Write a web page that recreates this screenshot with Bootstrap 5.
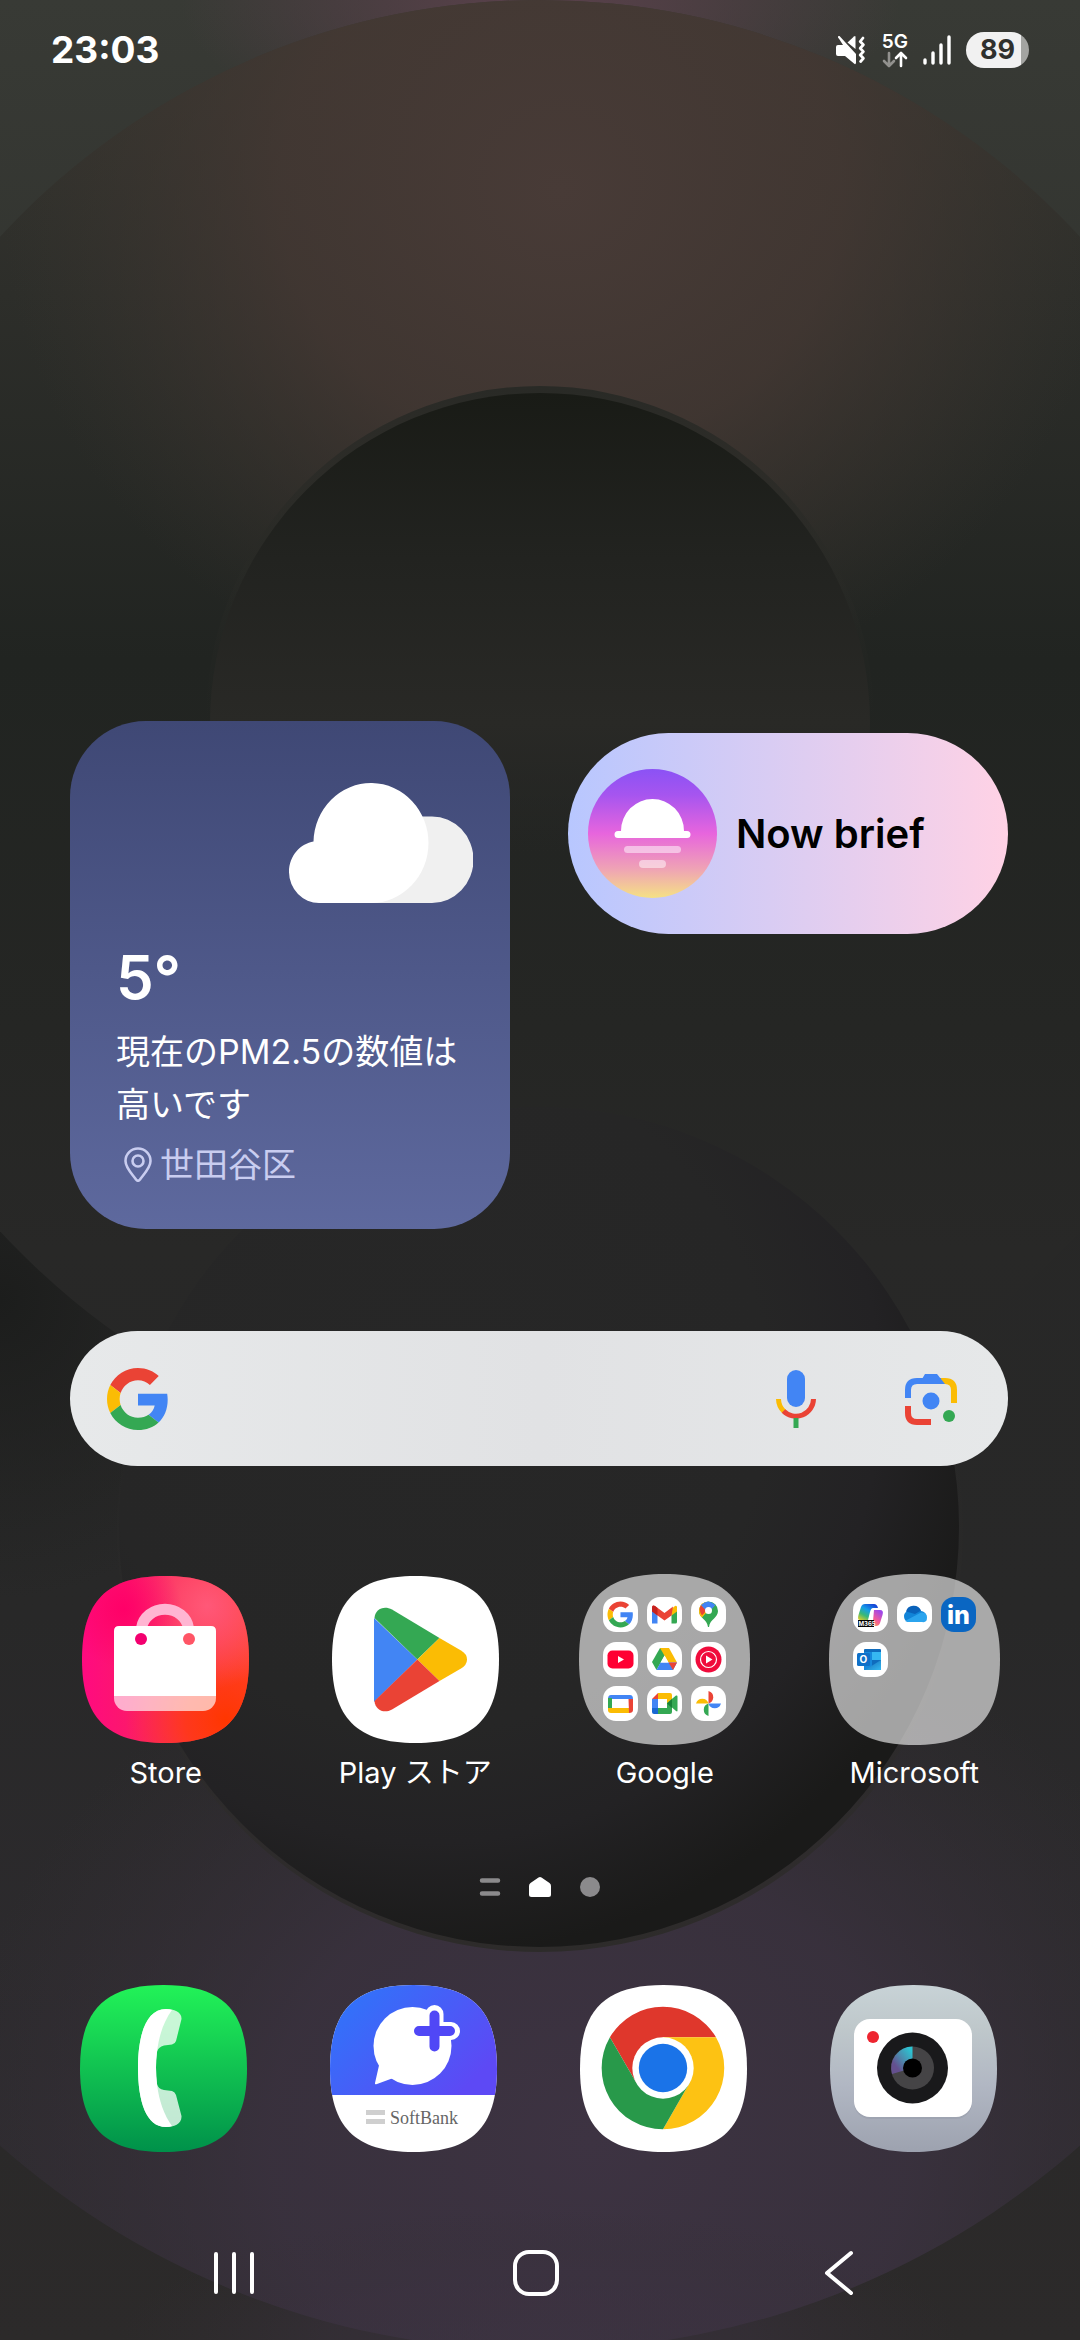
<!DOCTYPE html>
<html lang="ja">
<head>
<meta charset="utf-8">
<meta name="viewport" content="width=device-width, initial-scale=1">
<title>Home</title>
<link href="https://cdn.jsdelivr.net/npm/bootstrap@5.3.0/dist/css/bootstrap.min.css" rel="stylesheet">
<style>
  body { background: #272727; color: #fff; font-family: Inter, "Noto Sans CJK JP", sans-serif; }
  .wallpaper { z-index: -1; }
  .statusbar { height: 100px; padding: 0 51px; }
  .clock { font-size: 37px; line-height: 48px; font-weight: 700; }
  .status-icons { gap: 15px; }
  .net { font-size: 19px; line-height: 18px; font-weight: 600; }
  .battery { width: 63px; height: 36px; border-radius: 18px; font-size: 27px; font-weight: 700; color: #2f302d; background: linear-gradient(90deg, #f1f1f1 87%, #a3a4a1 87%); }
  .widgets { margin-top: 621px; padding: 0 72px 0 70px; display: grid; grid-template-columns: 1fr 1fr; gap: 58px; }
  .weather { border-radius: 76px; padding: 61px 37px 38px 46px; background: linear-gradient(#3f4875, #5e699e); }
  .temp { font-size: 60px; line-height: 72px; font-weight: 600; margin-top: 38px; }
  .report { font-size: 34px; line-height: 53px; margin-top: 12px; }
  .place { font-size: 34px; line-height: 53px; color: #c9cdf0; gap: 8px; margin-top: 7px; padding-left: 8px; }
  .brief { height: 201px; margin-top: 12px; padding-left: 20px; gap: 19px; border-radius: 101px; color: #000; font-size: 40px; font-weight: 600; background: linear-gradient(90deg, #b8c7ff, #ffd2e5); }
  .searchbar { height: 135px; margin: 102px 72px 0 70px; padding: 0 47px 0 37px; border-radius: 68px; background: linear-gradient(90deg, #e7e9ea, #e1e2e4 50%, #e6e8e9); }
  .searchbar input { background: none; color: #222; font-size: 34px; outline: 0; min-width: 0; }
  .voice { margin-right: 67px; }
  .apps { margin-top: 108px; padding: 0 41px; }
  .dock { margin-top: 87px; padding: 0 42px 0 38px; }
  .app { flex: 1 1 0; font-size: 29px; line-height: 40px; }
  .app-art { height: 171px; margin-bottom: 8px; }
  .pages { margin-top: 83px; height: 22px; gap: 28px; }
  .sysnav { margin-top: 88px; padding: 0 90px 0 83px; }
  .sysnav button { flex: 1 1 0; height: 66px; }
  .serif { font-family: "Liberation Serif", serif; }
</style>
<script src="https://cdn.jsdelivr.net/npm/bootstrap@5.3.0/dist/js/bootstrap.bundle.min.js"></script>
</head>
<body class="min-vh-100 d-flex flex-column overflow-x-hidden">

<svg class="wallpaper position-absolute top-0 start-0 w-100 h-100" viewBox="0 0 1080 2340" preserveAspectRatio="xMidYMid slice" aria-hidden="true">
  <defs>
    <linearGradient id="base" x1="0" y1="0" x2="0" y2="1"><stop offset="0" stop-color="#383a35"/><stop offset=".2" stop-color="#30322e"/><stop offset=".5" stop-color="#232423"/><stop offset=".65" stop-color="#252626"/><stop offset="1" stop-color="#2c2a2a"/></linearGradient>
    <radialGradient id="rose"><stop offset="0" stop-color="#5b414c"/><stop offset="1" stop-color="#5b414c" stop-opacity="0"/></radialGradient>
    <linearGradient id="upper" gradientUnits="userSpaceOnUse" x1="0" y1="0" x2="0" y2="1468"><stop offset="0" stop-color="#383630"/><stop offset=".2" stop-color="#2d2e2a"/><stop offset=".45" stop-color="#212421"/><stop offset=".7" stop-color="#252624"/><stop offset=".85" stop-color="#282827"/><stop offset="1" stop-color="#272727"/></linearGradient>
    <radialGradient id="warm"><stop offset="0" stop-color="#483b37"/><stop offset=".5" stop-color="#463934" stop-opacity=".75"/><stop offset="1" stop-color="#3c3630" stop-opacity="0"/></radialGradient>
    <linearGradient id="bowl" x1="0" y1="0" x2="0" y2="1"><stop offset="0" stop-color="#191b16"/><stop offset=".25" stop-color="#222320"/><stop offset=".5" stop-color="#292926"/><stop offset=".7" stop-color="#282826" stop-opacity="0"/></linearGradient>
    <linearGradient id="rimU" x1="0" y1="0" x2="0" y2="1"><stop offset="0" stop-color="#292a26"/><stop offset=".5" stop-color="#292a26" stop-opacity="0"/></linearGradient>
    <linearGradient id="lower" x1="0" y1="0" x2="0" y2="1"><stop offset="0" stop-color="#2a2927" stop-opacity="0"/><stop offset=".2" stop-color="#282827" stop-opacity=".8"/><stop offset=".55" stop-color="#282828"/><stop offset="1" stop-color="#312d33"/></linearGradient>
    <radialGradient id="shade"><stop offset="0" stop-color="#1c1d1c"/><stop offset="1" stop-color="#1f201f" stop-opacity="0"/></radialGradient>
    <radialGradient id="plum"><stop offset="0" stop-color="#3d3342"/><stop offset=".5" stop-color="#3b3240" stop-opacity=".8"/><stop offset="1" stop-color="#352f36" stop-opacity="0"/></radialGradient>
    <radialGradient id="well" cx=".37" cy=".34" r=".67"><stop offset="0" stop-color="#272727"/><stop offset=".6" stop-color="#262626"/><stop offset=".8" stop-color="#232224"/><stop offset="1" stop-color="#1a1a19"/></radialGradient>
    <linearGradient id="rimL" x1="0" y1="0" x2="0" y2="1"><stop offset=".35" stop-color="#2c2b2a" stop-opacity="0"/><stop offset="1" stop-color="#2d2b2a"/></linearGradient>
    <clipPath id="upperClip"><circle cx="540" cy="734" r="734"/></clipPath>
    <clipPath id="lowerClip"><circle cx="540" cy="1535" r="815"/></clipPath>
  </defs>
  <rect width="1080" height="2340" fill="url(#base)"/>
  <ellipse cx="540" cy="0" rx="360" ry="150" fill="url(#rose)"/>
  <circle cx="540" cy="1535" r="815" fill="url(#lower)"/>
  <g clip-path="url(#lowerClip)"><ellipse cx="590" cy="2140" rx="640" ry="560" fill="url(#plum)"/></g>
  <ellipse cx="540" cy="2340" rx="420" ry="130" fill="url(#plum)" opacity=".6"/>
  <ellipse cx="0" cy="1300" rx="280" ry="300" fill="url(#shade)"/>
  <circle cx="540" cy="734" r="734" fill="url(#upper)"/>
  <g clip-path="url(#upperClip)"><ellipse cx="560" cy="190" rx="560" ry="520" fill="url(#warm)"/></g>
  <circle cx="540" cy="720" r="334" fill="url(#rimU)"/>
  <circle cx="540" cy="723" r="330" fill="url(#bowl)"/>
  <circle cx="540" cy="1529" r="423" fill="url(#rimL)"/>
  <circle cx="539" cy="1527" r="420" fill="url(#well)"/>
</svg>

<header class="statusbar d-flex align-items-center justify-content-between">
  <time class="clock">23:03</time>
  <div class="status-icons d-flex align-items-center">
    <svg width="32" height="32" viewBox="0 0 32 32" role="img" aria-label="Mute" fill="#fff"><path d="M1 13Q1 11 3 11H8L4.500 5.500 3 3.500Q2.500 1.500 4.500 2L21 20V29Q20.500 31 19 29.500L10 22H3Q1 22 1 20Z"/><path d="M20.500 3V15L12.500 8.500 19 2.500Q20.500 1.500 20.500 3Z"/><path d="M28 4l-2.800 3.500 3.200 3.200-3.200 3.500 3.200 3.400-3.200 3.400 3.200 3.300-2.800 3.200" fill="none" stroke="#fff" stroke-width="2.800" stroke-linecap="round" stroke-linejoin="round"/></svg>
    <div class="net d-flex flex-column align-items-center"><span>5G</span>
      <svg width="26" height="17" viewBox="0 0 26 17" fill="none" stroke-width="2.600" stroke-linecap="round" stroke-linejoin="round" aria-hidden="true"><path d="M7 2v12M2 10l5 5 5-5" stroke="#92918e"/><path d="M19 15V3M14 7l5-5 5 5" stroke="#fff"/></svg></div>
    <svg width="28" height="30" viewBox="0 0 28 30" stroke="#fff" stroke-width="3.400" stroke-linecap="round" role="img" aria-label="Signal"><path d="M2 25v3M10 18v10M18 10v18M26 2v26"/></svg>
    <div class="battery d-flex align-items-center justify-content-center">89</div>
  </div>
</header>

<main>
  <section class="widgets align-items-start">
    <article class="weather">
      <svg class="d-block ms-auto" width="184" height="121" viewBox="0 3 184 116" preserveAspectRatio="none" role="img" aria-label="Cloudy"><path d="M100 36H143A41.500 41.500 0 0 1 143 119H80Z" fill="#f0f0f0"/><path d="M30 119A30 30 0 0 1 0 89.500C0 73 12 62 24.500 60A57.500 57.500 0 1 1 82 119Z" fill="#fff"/></svg>
      <div class="temp">5°</div>
      <div class="report">現在のPM2.5の数値は<br>高いです</div>
      <div class="place d-flex align-items-center">
        <svg width="28" height="35" viewBox="0 0 28 35" fill="none" stroke="#c9cdf0" stroke-width="2.600" stroke-linejoin="round" aria-hidden="true"><path d="M14 1.500A12.500 12.500 0 0 0 1.500 14C1.500 21 9 28 12 32.500Q14 35 16 32.500C19 28 26.500 21 26.500 14A12.500 12.500 0 0 0 14 1.500Z"/><circle cx="14" cy="14" r="5.500"/></svg>
        <span>世田谷区</span>
      </div>
    </article>
    <a href="#" class="brief d-flex align-items-center text-decoration-none">
      <svg width="129" height="129" viewBox="0 0 129 129" aria-hidden="true"><defs><linearGradient id="dusk" x1="0" y1="0" x2="0" y2="1"><stop offset="0" stop-color="#8b52f5"/><stop offset=".2" stop-color="#a655ef"/><stop offset=".5" stop-color="#e765dd"/><stop offset=".78" stop-color="#efa4b4"/><stop offset="1" stop-color="#f5e184"/></linearGradient></defs><circle cx="64.500" cy="64.500" r="64.500" fill="url(#dusk)"/><path d="M33 62a31.500 32 0 0 1 63 0h3a3.500 3.500 0 0 1 0 7H30a3.500 3.500 0 0 1 0-7Z" fill="#fff"/><g fill="#fff" fill-opacity=".5"><rect x="36" y="77" width="57" height="7" rx="3.500"/><rect x="51" y="91" width="27" height="8" rx="4"/></g></svg>
      <span>Now brief</span>
    </a>
  </section>

  <form class="searchbar d-flex align-items-center" role="search">
    <svg width="62" height="62" viewBox="0 0 48 48" role="img" aria-label="Google"><g id="g-mark"><path fill="#ea4335" d="M24 9.500c3.540 0 6.710 1.220 9.210 3.600l6.850-6.850C35.900 2.380 30.470 0 24 0 14.620 0 6.510 5.380 2.560 13.220l7.980 6.190C12.430 13.720 17.740 9.500 24 9.500z"/><path fill="#4285f4" d="M46.980 24.550c0-1.570-.15-3.090-.38-4.550H24v9.020h12.940c-.58 2.960-2.260 5.480-4.780 7.180l7.730 6c4.510-4.180 7.090-10.360 7.090-17.650z"/><path fill="#fbbc05" d="M10.530 28.590c-.48-1.450-.76-2.990-.76-4.590s.27-3.140.76-4.590l-7.980-6.190C.92 16.460 0 20.120 0 24c0 3.880.92 7.540 2.560 10.780l7.970-6.190z"/><path fill="#34a853" d="M24 48c6.480 0 11.930-2.130 15.890-5.810l-7.730-6c-2.150 1.450-4.920 2.300-8.160 2.300-6.260 0-11.570-4.220-13.470-9.910l-7.980 6.190C6.510 42.620 14.620 48 24 48z"/></g></svg>
    <input class="flex-grow-1 border-0 mx-3" type="text" aria-label="Search">
    <button type="button" class="voice btn p-0 border-0" aria-label="Voice search"><svg class="d-block" width="80" height="58" viewBox="0 0 80 58"><rect x="31" y="0" width="18" height="37" rx="9" fill="#4285f4"/><g fill="none" stroke-width="5"><path d="M22.500 29A17.500 17.500 0 0 0 28 41.500" stroke="#fbbc05"/><path d="M27.500 41A17.500 17.500 0 0 0 57.500 29" stroke="#ea4335"/><path d="M40 48V58" stroke="#34a853"/></g></svg></button>
    <button type="button" class="btn p-0 border-0" aria-label="Google Lens"><svg class="d-block" width="58" height="58" viewBox="0 0 58 58"><g fill="none" stroke-width="6"><path d="M5 28V20Q5 11 14 11H42" stroke="#4285f4"/><path d="M38 11H42Q51 11 51 20V33" stroke="#fbbc05"/><path d="M5 36V43Q5 52 14 52H28" stroke="#ea4335"/></g><path d="M16 14L22 4H34L42 14Z" fill="#4285f4"/><circle cx="28" cy="31" r="8.500" fill="#4285f4"/><circle cx="46" cy="46" r="6" fill="#34a853"/></svg></button>
  </form>

  <nav class="apps d-flex" aria-label="Apps">
    <a href="#" class="app d-flex flex-column align-items-center text-white text-decoration-none">
      <span class="app-art d-flex align-items-center"><svg width="167" height="167" viewBox="0 0 167 167" aria-hidden="true">
        <defs>
          <clipPath id="tile"><path id="tile-shape" d="M83.500 0C142 0 167 25 167 83.500S142 167 83.500 167 0 142 0 83.500 25 0 83.500 0Z"/></clipPath>
          <linearGradient id="st"><stop offset="0" stop-color="#ff0a80"/><stop offset=".45" stop-color="#fa2060"/><stop offset="1" stop-color="#ff4433"/></linearGradient>
          <radialGradient id="st1" cx=".86" cy=".86" r=".6"><stop offset="0" stop-color="#ff3600"/><stop offset=".4" stop-color="#ff3a10" stop-opacity=".8"/><stop offset="1" stop-color="#ff4030" stop-opacity="0"/></radialGradient>
          <radialGradient id="st2" cx=".75" cy=".18" r=".5"><stop offset="0" stop-color="#ff5878"/><stop offset="1" stop-color="#ff5878" stop-opacity="0"/></radialGradient>
          <radialGradient id="st3" cx=".25" cy=".2" r=".35"><stop offset="0" stop-color="#ff0068"/><stop offset="1" stop-color="#ff0068" stop-opacity="0"/></radialGradient>
        </defs>
        <use href="#tile-shape" fill="url(#st)"/><use href="#tile-shape" fill="url(#st1)"/><use href="#tile-shape" fill="url(#st2)"/><use href="#tile-shape" fill="url(#st3)"/>
        <path d="M59.500 52A23.700 21.500 0 0 1 106.500 52" fill="none" stroke="#ffb5d2" stroke-width="11"/>
        <path d="M32 120H134V122A13 13 0 0 1 121 135H45A13 13 0 0 1 32 122Z" fill="#fff" fill-opacity=".65"/>
        <path d="M37 50H129Q134 50 134 55V120H32V55Q32 50 37 50Z" fill="#fff"/>
        <circle cx="59" cy="63" r="6" fill="#f3006f"/><circle cx="107" cy="63" r="6" fill="#ff5566"/></svg></span>
      <span>Store</span>
    </a>
    <a href="#" class="app d-flex flex-column align-items-center text-white text-decoration-none">
      <span class="app-art d-flex align-items-center"><svg width="167" height="167" viewBox="0 0 167 167" aria-hidden="true">
        <use href="#tile-shape" fill="#fff"/>
        <path d="M42 42L85.300 83.500 42 126Z" fill="#4285f4"/><path d="M42.500 42C43 33 52 29 60 33.500L107.500 62 85.300 83.500Z" fill="#34a853"/><path d="M107.500 62L129 74.500Q135 78 135 83.500T129 92.500L107.500 105 85.300 83.500Z" fill="#fbbc04"/><path d="M42.500 125C43 134 52 138 60 133.500L107.500 105 85.300 83.500Z" fill="#ea4335"/></svg></span>
      <span>Play ストア</span>
    </a>
    <a href="#" class="app d-flex flex-column align-items-center text-white text-decoration-none">
      <span class="app-art d-flex align-items-center"><svg width="171" height="171" viewBox="0 0 171 171" aria-hidden="true">
        <path id="folder" d="M85.500 0C145.500 0 171 25.500 171 85.500S145.500 171 85.500 171 0 145.500 0 85.500 25.500 0 85.500 0Z" fill="#fff" fill-opacity=".6"/>
        <g transform="translate(24 23)"><rect id="mini" width="35" height="35" rx="13" fill="#fff"/><g transform="translate(4.500 4.500) scale(.54)"><use href="#g-mark"/></g></g>
        <g transform="translate(68 23)"><use href="#mini"/><path d="M5 26.500V9.500L10.500 13V26.500Z" fill="#4285f4"/><path d="M24.500 26.500V13L30 9.500V25Q30 26.500 28.500 26.500Z" fill="#34a853"/><path d="M24.500 12L28 9Q30 8 30 11V14.500L24.500 18.500Z" fill="#fbbc04"/><path d="M5 14V11Q5 7.500 8 9L17.500 16 26 9.500 24.500 18.500 17.500 23.500 10.500 18.500Z" fill="#ea4335"/><path d="M5 14.500V11Q5 7.500 8 9L10.500 11V18.500Z" fill="#c5221f"/></g>
        <g transform="translate(112 23)"><use href="#mini"/><path d="M8 14A9.500 9.500 0 0 1 27 14C27 21 19 22 18 30H17C16 22 8 21 8 14Z" fill="#34a853"/><path d="M8 14Q8 18 11 20.500L20 10 15 5Q8 7 8 14Z" fill="#fbbc04"/><path d="M10 8L16 13 11 18.500Q7 13 10 8Z" fill="#ea4335"/><path d="M10 8Q17 1 24.500 8L17 16Z" fill="#4285f4"/><circle cx="17.500" cy="13.500" r="3.500" fill="#fff"/></g>
        <g transform="translate(24 68)"><use href="#mini"/><rect x="4.500" y="8.500" width="26" height="18" rx="5" fill="#f03"/><path d="M15 14L21 17.500 15 21Z" fill="#fff"/></g>
        <g transform="translate(68 68)"><use href="#mini"/><path d="M13 6H22L17.500 14 9.500 28 5 20Z" fill="#34a853"/><path d="M13 6H22L30 20.500H21.500Z" fill="#fbbc04"/><path d="M9.500 28L13.500 20.500H30L26 28Z" fill="#4285f4"/><path d="M21.500 20.500H30L26 28Z" fill="#ea4335"/><path d="M17.500 13.500L21.500 20.500H13.500Z" fill="#fff"/></g>
        <g transform="translate(112 68)"><use href="#mini"/><circle cx="17.500" cy="17.500" r="13" fill="#f00c3c"/><circle cx="17.500" cy="17.500" r="8" fill="none" stroke="#fff" stroke-width="1.200"/><path d="M15 13.500L21.500 17.500 15 21.500Z" fill="#fff"/></g>
        <g transform="translate(24 112)"><use href="#mini"/><path d="M5 13Q5 9 8 9H27Q30 9 30 13H9Z" fill="#4285f4"/><path d="M5 12H9V23H5Z" fill="#34a853"/><path d="M5 22H26V27H8Q5 27 5 24Z" fill="#fbbc04"/><path d="M25.500 13H30V24Q30 27 26 27Z" fill="#ea4335"/></g>
        <g transform="translate(68 112)"><use href="#mini"/><path d="M11 7H23Q25 7 25 9V15L20 19V13H11Z" fill="#fbbc04"/><path d="M11 7V13H5Z" fill="#ea4335"/><path d="M5 13H11V22H5Z" fill="#4285f4"/><path d="M5 22H11V28H7Q5 28 5 26Z" fill="#1967d2"/><path d="M11 22H20V17L29 9.500Q30.500 9 30.500 10.500V24.500Q30.500 26 29 25L25 21.500V26Q25 28 23 28H11Z" fill="#34a853"/><path d="M20 17.500L25 13V22Z" fill="#188038"/></g>
        <g transform="translate(112 112)"><use href="#mini"/><path d="M17.500 17.500V5A6.500 6.500 0 0 1 17.500 17.500" fill="#ea4335"/><path d="M17.500 17.500H30A6.500 6.500 0 0 1 17.500 17.500" fill="#4285f4"/><path d="M17.500 17.500V30A6.500 6.500 0 0 1 17.500 17.500" fill="#34a853"/><path d="M17.500 17.500H5A6.500 6.500 0 0 1 17.500 17.500" fill="#fbbc04"/></g>
      </svg></span>
      <span>Google</span>
    </a>
    <a href="#" class="app d-flex flex-column align-items-center text-white text-decoration-none">
      <span class="app-art d-flex align-items-center"><svg width="171" height="171" viewBox="0 0 171 171" aria-hidden="true">
        <defs><linearGradient id="cop1" x1=".7" y1="0" x2="0" y2="1"><stop offset="0" stop-color="#1748d8"/><stop offset=".35" stop-color="#159fe8"/><stop offset=".65" stop-color="#38b878"/><stop offset="1" stop-color="#f5d020"/></linearGradient><linearGradient id="cop2" x1=".6" y1="0" x2="0" y2="1"><stop offset="0" stop-color="#a048e8"/><stop offset=".5" stop-color="#f25a9a"/><stop offset="1" stop-color="#ff9a4a"/></linearGradient><linearGradient id="inb" x1="0" y1="0" x2="1" y2="1"><stop offset="0" stop-color="#1066b5"/><stop offset="1" stop-color="#35b9f1"/></linearGradient></defs>
        <use href="#folder"/>
        <g transform="translate(24 23)"><use href="#mini"/><path d="M12 7H21Q24 7 25 11H20Q18 11 17 15L15 23H7Q4 23 5.500 18L8 10Q9 7 12 7Z" fill="url(#cop1)"/><path d="M21 13H27Q31 13 29.500 18L27 26Q26 29 23 29H17L18 24H20Z" fill="url(#cop2)"/><rect x="5" y="23" width="16" height="7" fill="#000"/><text x="5.500" y="29" font-size="6" font-weight="700" fill="#fff">M365</text></g>
        <g transform="translate(68 23)"><use href="#mini"/><path d="M11 25A6 6 0 0 1 9.500 14.500 8 8 0 0 1 24 14 5.800 5.800 0 0 1 26 25Z" fill="#1184d8"/><path d="M9 14.500A8 8 0 0 1 24 13.500L18 17Z" fill="#0a62ba"/><path d="M8 24L24 15.500Q30 15 30 20.500T25 25H11Z" fill="#2ba4ee"/></g>
        <g transform="translate(112 23)"><rect width="35" height="35" rx="13" fill="#0a66c2"/><text x="6" y="27" font-size="25" font-weight="800" fill="#fff">in</text></g>
        <g transform="translate(24 68)"><use href="#mini"/><rect x="11" y="7" width="17" height="21" rx="1" fill="#0f6cbd"/><path d="M11 10H19V28H11Z" fill="#1688dc"/><path d="M19 10H28V18H19Z" fill="#36b8f2"/><path d="M28 18V27Q28 28 27 28H12Z" fill="url(#inb)"/><rect x="4" y="11" width="13" height="13" rx="1.500" fill="#0f70c8"/><text x="6.500" y="21" font-size="10" font-weight="700" fill="#fff">O</text></g>
      </svg></span>
      <span>Microsoft</span>
    </a>
  </nav>

  <div class="pages d-flex justify-content-center align-items-center" aria-hidden="true">
    <svg width="22" height="22" viewBox="0 0 22 22" stroke="#8b8a8c" stroke-width="4.500" stroke-linecap="round"><path d="M3 4.500H19M3 17.500H19"/></svg>
    <svg width="22" height="22" viewBox="0 0 22 22"><path d="M9.500 1.500Q11 .5 12.500 1.500L20.500 7Q22 8 22 10V18.500Q22 21 19.500 21H2.500Q0 21 0 18.500V10Q0 8 1.500 7Z" fill="#fff"/></svg>
    <svg width="22" height="22" viewBox="0 0 22 22"><circle cx="11" cy="11" r="10" fill="#8b8a8c"/></svg>
  </div>
</main>

<nav class="dock d-flex" aria-label="Dock">
  <a href="#" class="app d-flex justify-content-center" aria-label="Phone"><svg width="167" height="167" viewBox="0 0 167 167"><defs><linearGradient id="grn" x1="0" y1="0" x2="0" y2="1"><stop offset="0" stop-color="#22f358"/><stop offset="1" stop-color="#00914a"/></linearGradient></defs><use href="#tile-shape" fill="url(#grn)"/><path d="M86 24C94 24 102 27 101.500 34L96 56Q95 59 92 59.500L84 60.500Q78 62 77 67Q75 82 77 99Q78 104 84 105L92 106Q95 107 96 110L101.500 131C102 139 94 142 86 142C66 142 58 116 58 83S66 24 86 24Z" fill="#fff" fill-opacity=".76"/><path d="M86 24Q90 24 92 25C84 36 79 50 77 67Q75 82 77 99C79 116 84 130 92 141Q90 142 86 142C66 142 58 116 58 83S66 24 86 24Z" fill="#fff"/></svg></a>
  <a href="#" class="app d-flex justify-content-center" aria-label="SoftBank Message"><svg width="167" height="167" viewBox="0 0 167 167"><defs><linearGradient id="blu" x1="0" y1="0" x2="1" y2=".65"><stop offset="0" stop-color="#2b78fa"/><stop offset="1" stop-color="#5d49f5"/></linearGradient></defs><use href="#tile-shape" fill="#fff"/><g clip-path="url(#tile)"><rect width="167" height="110" fill="url(#blu)"/></g><path d="M104.500 29V62M88 46H121" stroke="#fff" stroke-width="18" stroke-linecap="round"/><circle cx="82.500" cy="61" r="39" fill="#fff"/><path d="M50 76L45 98Q44.500 100 47 99L66 92Z" fill="#fff"/><path d="M104.500 30.500V61.500M89 46H120" stroke="#5047f6" stroke-width="10" stroke-linecap="round"/><path d="M36 125H55V130H36ZM36 134H55V139H36Z" fill="#cfcfcf"/><text class="serif" x="60" y="139" font-size="18" fill="#666">SoftBank</text></svg></a>
  <a href="#" class="app d-flex justify-content-center" aria-label="Chrome"><svg width="167" height="167" viewBox="0 0 167 167"><use href="#tile-shape" fill="#fff"/><path d="M29.900 52.300A61.300 61.300 0 0 1 136 52.300H83L56.400 98Z" fill="#df372c"/><path d="M136 52.300A61.300 61.300 0 0 1 83 144.300L109.500 98 83 52.300Z" fill="#fdc213"/><path d="M83 144.300A61.300 61.300 0 0 1 29.900 52.300L56.400 98H109.500Z" fill="#28994a"/><circle cx="83" cy="83" r="30.700" fill="#fff"/><circle cx="83" cy="83" r="24.200" fill="#1a73e8"/></svg></a>
  <a href="#" class="app d-flex justify-content-center" aria-label="Camera"><svg width="167" height="167" viewBox="0 0 167 167"><defs><linearGradient id="cam" x1="0" y1="0" x2="0" y2="1"><stop offset="0" stop-color="#c8d3d7"/><stop offset=".25" stop-color="#bfc8cb"/><stop offset=".6" stop-color="#b1b7c3"/><stop offset="1" stop-color="#9da2af"/></linearGradient><linearGradient id="iris" x1="1" y1="0" x2="0" y2="1"><stop offset=".1" stop-color="#2cc4d2"/><stop offset=".45" stop-color="#4a8cae"/><stop offset=".75" stop-color="#64508f"/></linearGradient></defs><use href="#tile-shape" fill="url(#cam)"/><rect x="24" y="35" width="118" height="99" rx="16" fill="#8f95a4" opacity=".35"/><rect x="24" y="34" width="118" height="98" rx="16" fill="#fff"/><circle cx="43" cy="52" r="6" fill="#ee2530"/><circle cx="82.500" cy="83" r="35.500" fill="#19191b"/><circle cx="82.500" cy="83" r="21.500" fill="#454446"/><path d="M82.500 61.500A21.500 21.500 0 0 0 62 89L82.500 83Z" fill="url(#iris)"/><circle cx="82.500" cy="83" r="9.500" fill="#000"/></svg></a>
</nav>

<nav class="sysnav d-flex" aria-label="System">
  <button type="button" class="btn p-0 border-0" aria-label="Recents"><svg width="42" height="46" viewBox="0 0 42 46" stroke="#fff" stroke-width="4" stroke-linecap="round"><path d="M3 4V42M21 4V42M39 4V42"/></svg></button>
  <button type="button" class="btn p-0 border-0" aria-label="Home"><svg width="46" height="46" viewBox="0 0 46 46"><rect x="2" y="2" width="42" height="42" rx="14" fill="none" stroke="#fff" stroke-width="4"/></svg></button>
  <button type="button" class="btn p-0 border-0" aria-label="Back"><svg width="30" height="46" viewBox="0 0 30 46" fill="none" stroke="#fff" stroke-width="4" stroke-linecap="round" stroke-linejoin="round"><path d="M27 3L3 23 27 43"/></svg></button>
</nav>
</body>
</html>
